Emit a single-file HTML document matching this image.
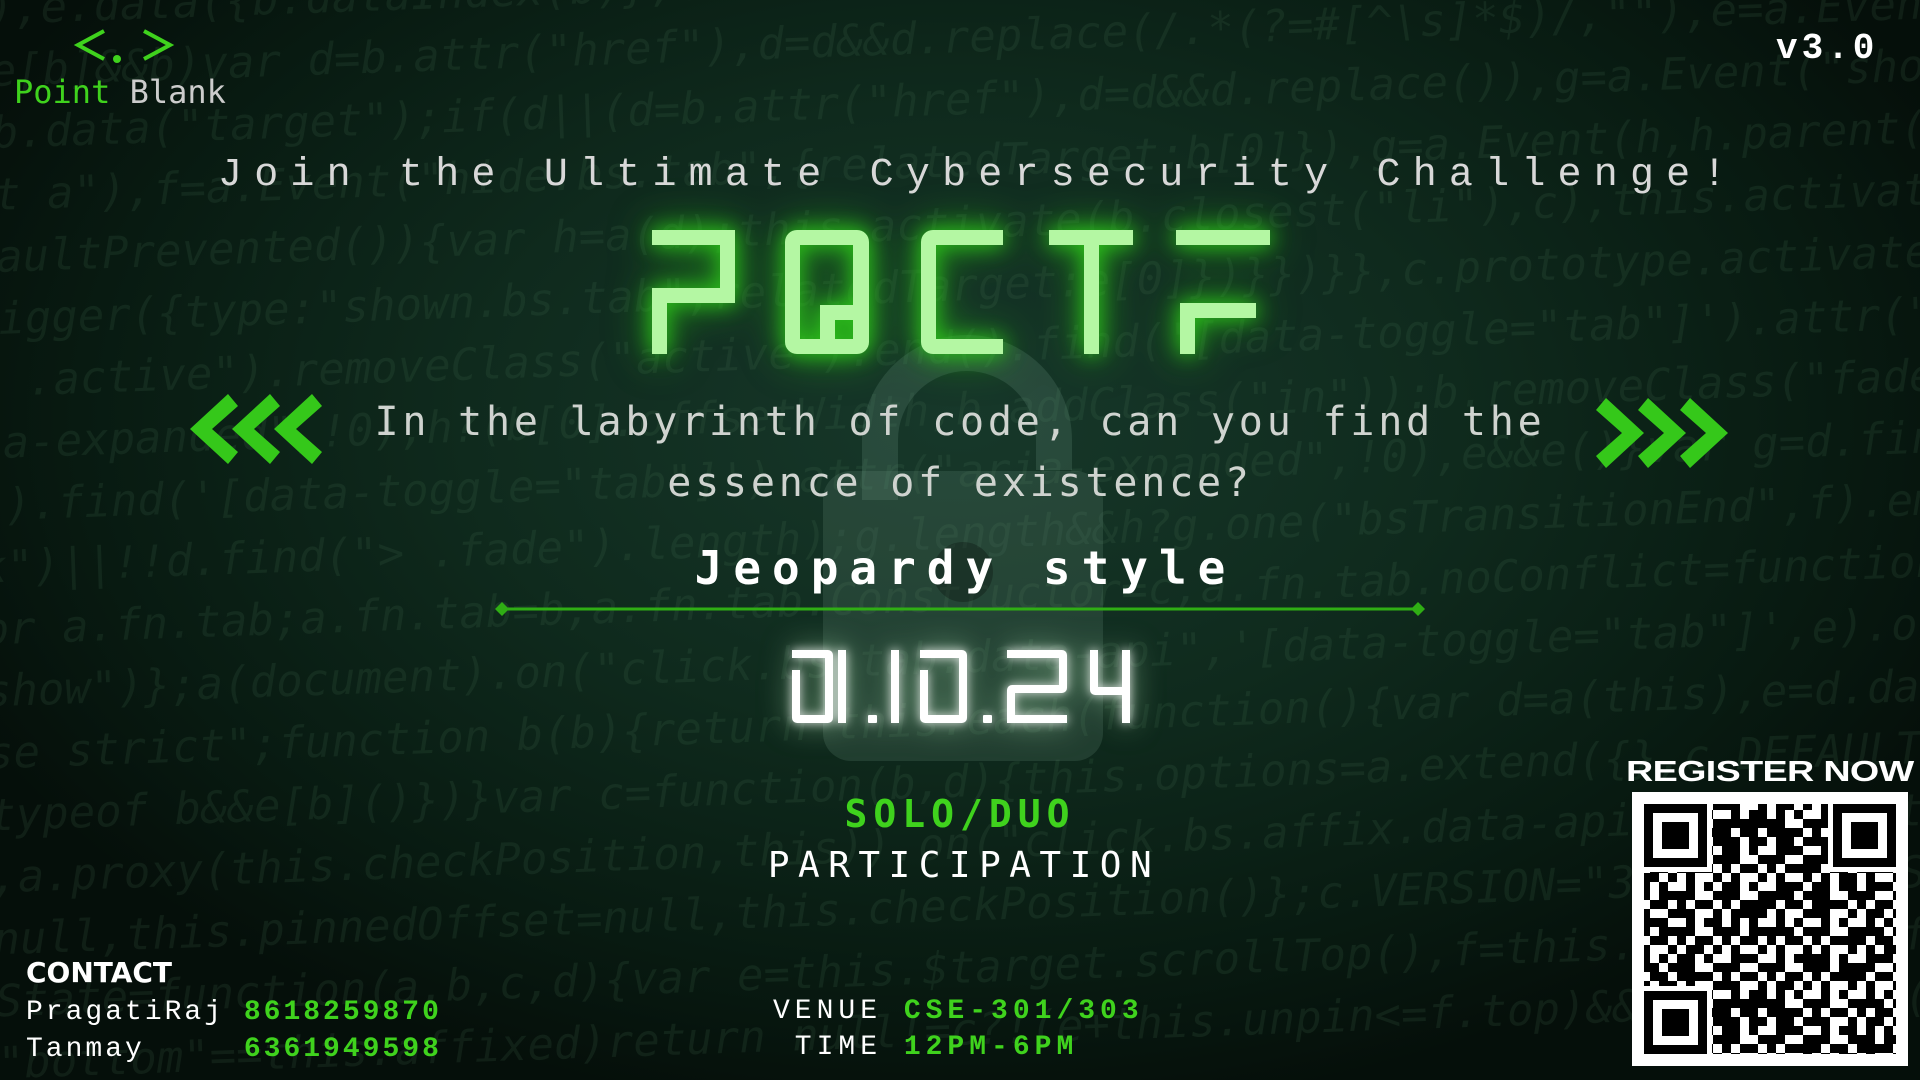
<!DOCTYPE html>
<html><head><meta charset="utf-8"><style>
html,body{margin:0;padding:0;width:1920px;height:1080px;overflow:hidden}
#root{width:1920px;height:1080px;position:relative;overflow:hidden;background:radial-gradient(ellipse 1100px 700px at 960px 420px,#17382a 0%,#0f2a1d 45%,#081a11 80%,#050f0a 100%);font-family:"Liberation Mono","DejaVu Sans Mono",monospace}
.abs{position:absolute;white-space:nowrap}
.code{position:absolute;left:-40px;top:-20px;width:2100px;color:rgba(80,130,95,0.15);font-family:"DejaVu Sans Mono","Liberation Mono",monospace;font-size:44px;line-height:62px;font-style:italic;transform:rotate(-2deg);transform-origin:0 0;white-space:pre}
.g{color:#3fd21d}
</style></head><body><div id="root">
<div class="code">y),e.data({b.dataIndex(b)};c=function(b){this.element=a(b)};c.VERSION="3.3.7",c.replace(/.*(?=#[^\s]*$)/,"")
le[b]&&b)var d=b.attr("href"),d=d&&d.replace(/.*(?=#[^\s]*$)/,""),e=a.Event("show.bs.tab",{relatedTarget
tb.data("target");if(d||(d=b.attr("href"),d=d&&d.replace()),g=a.Event("show.bs.tab",{relatedTarget:b[0]})
st a"),f=a.Event("hide.bs.tab",{relatedTarget:b[0]}),g=a.Event(h,h.parent(),function
faultPrevented()){var h=a(d);this.activate(b.closest("li"),c),this.activate(h,h.parent(),fun
rigger({type:"shown.bs.tab",relatedTarget:e[0]})}})}},c.prototype.activate=function(b,d,e){func
> .active").removeClass("active").end().find('[data-toggle="tab"]').attr("aria-expanded",!1),b
ia-expanded",!0),h?(b[0].offsetWidth,b.addClass("in")):b.removeClass("fade"),b.parent(".dropdo
().find('[data-toggle="tab"]').attr("aria-expanded",!0),e&&e()}var g=d.find("> .active"),h=e&&
k")||!!d.find("> .fade").length);g.length&&h?g.one("bsTransitionEnd",f).emulateTransitionEnd
or a.fn.tab;a.fn.tab=b,a.fn.tab.Constructor=c,a.fn.tab.noConflict=function(){return a.fn.t
show")};a(document).on("click.bs.tab.data-api",'[data-toggle="tab"]',e).on("click.bs.tab.data
se strict";function b(b){return this.each(function(){var d=a(this),e=d.data("bs.affix"),f="ob
typeof b&&e[b]()})}var c=function(b,d){this.options=a.extend({},c.DEFAULTS,d),this.$target=a
,a.proxy(this.checkPosition,this)).on("click.bs.affix.data-api",a.proxy(this.checkPositionWi
null,this.pinnedOffset=null,this.checkPosition()};c.VERSION="3.3.7",c.RESET="affix affix-top
State=function(a,b,c,d){var e=this.$target.scrollTop(),f=this.$element.offset(),g=this.$targ
"bottom"==this.affixed)return null!=c?!(e+this.unpin<=f.top)&&"bottom":!(e+g<=a-d)&&"bottom"</div>

<!-- lock -->
<svg class="abs" style="left:0;top:0" width="1920" height="1080">
  <path d="M880 500 V440 a87 87 0 0 1 174 0 V470" fill="none" stroke="rgba(110,150,130,0.22)" stroke-width="36"/>
  <rect x="823" y="471" width="280" height="290" rx="28" fill="rgba(110,150,130,0.2)"/>
  <circle cx="963" cy="572" r="30" fill="rgba(0,0,0,0.25)"/>
</svg>

<!-- logo -->
<svg class="abs" style="left:70px;top:25px" width="110" height="45">
  <polyline points="34,6 8,20 34,34" fill="none" stroke="#3fd21d" stroke-width="4"/>
  <circle cx="47" cy="34" r="4" fill="#3fd21d"/>
  <polyline points="74,6 100,20 74,34" fill="none" stroke="#3fd21d" stroke-width="4"/>
</svg>
<div class="abs" style="left:14px;top:73px;font-size:32px;color:#ccc;font-family:'DejaVu Sans Mono',monospace"><span class="g">Point</span> Blank</div>
<div class="abs" style="left:1776px;top:28px;font-size:36px;font-weight:bold;color:#fff;letter-spacing:4px">v3.0</div>

<div class="abs" style="left:218px;top:153px;font-size:40px;color:#d8d8d8;letter-spacing:12.2px">Join the Ultimate Cybersecurity Challenge!</div>

<!-- PQCTF -->
<svg class="abs" style="left:0;top:0;filter:drop-shadow(0 0 10px #2fd01a) drop-shadow(0 0 18px rgba(40,200,20,0.6))" width="1920" height="400">
 <g fill="#b4f7a3">
  <rect x="652" y="230" width="83" height="15"/><rect x="720" y="230" width="15" height="73"/><rect x="652" y="288" width="83" height="15"/><rect x="652" y="288" width="15" height="66"/>
  <path d="M797 230 h60 a12 12 0 0 1 12 12 v100 a12 12 0 0 1 -12 12 h-60 a12 12 0 0 1 -12 -12 v-100 a12 12 0 0 1 12 -12z M800 245 v94 h53 v-94z" fill-rule="evenodd"/>
  <rect x="820" y="305" width="34" height="15"/><rect x="820" y="305" width="15" height="34"/>
  <path d="M933 230 h70 v15 h-67 v94 h67 v15 h-70 a12 12 0 0 1 -12 -12 v-100 a12 12 0 0 1 12 -12z"/>
  <rect x="1049" y="230" width="84" height="15"/><rect x="1084" y="230" width="15" height="124"/>
  <rect x="1176" y="230" width="94" height="15"/><rect x="1180" y="303" width="76" height="15"/><rect x="1180" y="303" width="15" height="51"/>
 </g>
</svg>

<!-- chevrons -->
<svg class="abs" style="left:190px;top:392px" width="135" height="74">
 <g fill="#35c81a">
  <polygon points="0,37 38,2 48,14 22,37 48,60 38,72"/>
  <polygon points="42,37 80,2 90,14 64,37 90,60 80,72"/>
  <polygon points="84,37 122,2 132,14 106,37 132,60 122,72"/>
 </g>
</svg>
<svg class="abs" style="left:1596px;top:396px" width="135" height="74">
 <g fill="#35c81a">
  <polygon points="132,37 94,2 84,14 110,37 84,60 94,72"/>
  <polygon points="90,37 52,2 42,14 68,37 42,60 52,72"/>
  <polygon points="48,37 10,2 0,14 26,37 0,60 10,72"/>
 </g>
</svg>

<div class="abs" style="left:0;width:1920px;text-align:center;top:392px;line-height:61px;color:#cfd3cf;letter-spacing:3.8px;font-family:'DejaVu Sans Mono',monospace;font-size:40px">In the labyrinth of code, can you find the<br>essence of existence?</div>

<div class="abs" style="left:0;width:1920px;text-align:center;top:541px;font-weight:bold;color:#fff;letter-spacing:11px;font-family:'DejaVu Sans Mono',monospace;font-size:46px;padding-left:11px;box-sizing:border-box">Jeopardy style</div>

<svg class="abs" style="left:494px;top:601px" width="932" height="16">
 <line x1="8" y1="8" x2="924" y2="8" stroke="#2fae14" stroke-width="3"/>
 <polygon points="1,8 8,1 15,8 8,15" fill="#2fae14"/><polygon points="917,8 924,1 931,8 924,15" fill="#2fae14"/>
</svg>

<!-- date -->
<svg class="abs" style="left:0;top:0;filter:drop-shadow(0 0 5px rgba(255,255,255,0.85)) drop-shadow(0 0 14px rgba(200,255,200,0.5))" width="1920" height="800">
 <g fill="#fff">
  <!-- 0 -->
  <path d="M792 650 h36 a5 5 0 0 1 5 5 v63 a5 5 0 0 1 -5 5 h-31 a5 5 0 0 1 -5 -5 v-48 h8 v45 h25 v-57 h-33z"/>
  <!-- 1 -->
  <rect x="838" y="650" width="8" height="73"/>
  <!-- . -->
  <rect x="868" y="715" width="9" height="8" rx="1"/>
  <!-- 1 -->
  <rect x="891" y="650" width="8" height="73"/>
  <!-- 0 -->
  <path d="M920 650 h42 a5 5 0 0 1 5 5 v63 a5 5 0 0 1 -5 5 h-37 a5 5 0 0 1 -5 -5 v-48 h8 v45 h31 v-57 h-39z"/>
  <!-- . -->
  <rect x="983" y="715" width="9" height="8" rx="1"/>
  <!-- 2 -->
  <path d="M1007 650 h55 a5 5 0 0 1 5 5 v33 a5 5 0 0 1 -5 5 h-47 v22 h52 v8 h-60 v-33 a5 5 0 0 1 5 -5 h47 v-27 h-52z"/>
  <!-- 4 -->
  <path d="M1090 650 h8 v37 h24 v-37 h8 v73 h-8 v-28 h-27 a5 5 0 0 1 -5 -5z"/>
 </g>
</svg>

<div class="abs" style="left:0;width:1920px;text-align:center;top:792px;font-weight:bold;color:#3fd21d;letter-spacing:6px;font-family:'DejaVu Sans Mono',monospace;font-size:38px">SOLO/DUO</div>
<div class="abs" style="left:0;width:1920px;text-align:center;top:845px;color:#fff;letter-spacing:8.5px;font-family:'DejaVu Sans Mono',monospace;font-size:36px;padding-left:8px;box-sizing:border-box">PARTICIPATION</div>

<div class="abs" style="left:26px;top:956px;font-size:28px;font-weight:bold;color:#fff;font-family:'DejaVu Sans','Liberation Sans',sans-serif">CONTACT</div>
<div class="abs" style="left:26px;top:994px;font-size:28px;line-height:37px;color:#fff;letter-spacing:3px">PragatiRaj <b class="g">8618259870</b><br>Tanmay&nbsp;&nbsp;&nbsp;&nbsp; <b class="g">6361949598</b></div>
<div class="abs" style="left:773px;top:994px;font-size:28px;line-height:36px;color:#fff;letter-spacing:5px">VENUE <b class="g">CSE-301/303</b><br>&nbsp;TIME <b class="g">12PM-6PM</b></div>

<div class="abs" style="left:1626px;top:756px;font-size:29px;font-weight:900;color:#fff;font-family:'Liberation Sans',sans-serif;letter-spacing:-0.5px;transform:scaleX(1.3);transform-origin:0 0">REGISTER NOW</div>

<!-- QR -->
<svg class="abs" style="left:1632px;top:792px" width="276" height="274" viewBox="0 0 276 274">
 <defs>
  <pattern id="p1" width="45" height="36" patternUnits="userSpaceOnUse">
   <rect x="0" y="0" width="9" height="9"/><rect x="18" y="0" width="18" height="9"/><rect x="9" y="9" width="9" height="18"/><rect x="27" y="18" width="9" height="9"/><rect x="36" y="9" width="9" height="9"/><rect x="0" y="27" width="18" height="9"/><rect x="36" y="27" width="9" height="9"/>
  </pattern>
  <pattern id="p2" width="63" height="45" patternUnits="userSpaceOnUse">
   <rect x="0" y="18" width="9" height="9"/><rect x="27" y="0" width="9" height="18"/><rect x="45" y="27" width="18" height="9"/><rect x="18" y="36" width="9" height="9"/><rect x="54" y="0" width="9" height="9"/>
  </pattern>
 </defs>
 <rect width="276" height="274" fill="#fff"/>
 <rect x="12" y="12" width="252" height="250" fill="url(#p1)"/>
 <rect x="12" y="12" width="252" height="250" fill="url(#p2)"/>
 <g>
  <rect x="10" y="10" width="70" height="70" fill="#fff"/><rect x="196" y="10" width="70" height="70" fill="#fff"/><rect x="10" y="194" width="70" height="70" fill="#fff"/>
  <rect x="12" y="12" width="63" height="63"/><rect x="21" y="21" width="45" height="45" fill="#fff"/><rect x="30" y="30" width="27" height="27"/>
  <rect x="201" y="12" width="63" height="63"/><rect x="210" y="21" width="45" height="45" fill="#fff"/><rect x="219" y="30" width="27" height="27"/>
  <rect x="12" y="199" width="63" height="63"/><rect x="21" y="208" width="45" height="45" fill="#fff"/><rect x="30" y="217" width="27" height="27"/>
 </g>
</svg>
</div></body></html>
